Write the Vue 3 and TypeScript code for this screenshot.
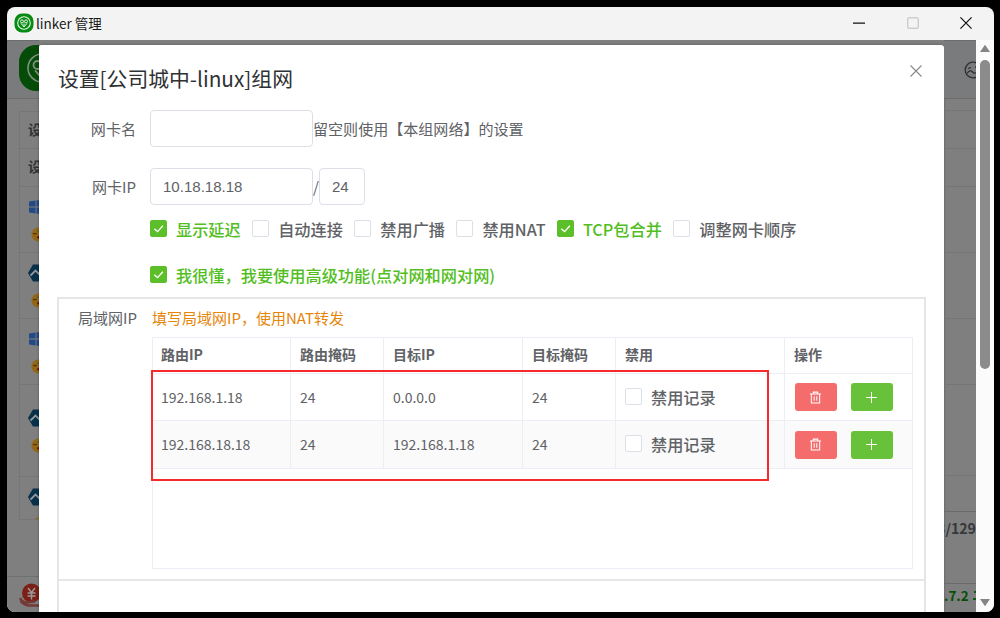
<script setup lang="ts">
interface Option {
  label: string
  checked: boolean
}
interface Route {
  ip: string
  mask: string
  target: string
  targetMask: string
}

const options: Option[] = [
  { label: '显示延迟', checked: true },
  { label: '自动连接', checked: false },
  { label: '禁用广播', checked: false },
  { label: '禁用NAT', checked: false },
  { label: 'TCP包合并', checked: true },
  { label: '调整网卡顺序', checked: false },
]

const columns: string[] = ['路由IP', '路由掩码', '目标IP', '目标掩码', '禁用', '操作']

const routes: Route[] = [
  { ip: '192.168.1.18', mask: '24', target: '0.0.0.0', targetMask: '24' },
  { ip: '192.168.18.18', mask: '24', target: '192.168.1.18', targetMask: '24' },
]

const devices: { os: 'windows' | 'alpine'; size: string }[] = [
  { os: 'windows', size: 'mid' },
  { os: 'alpine', size: 'mid' },
  { os: 'windows', size: 'mid' },
  { os: 'alpine', size: 'tall' },
  { os: 'alpine', size: 'cut' },
]
</script>

<template>
  <div class="desktop">
    <div class="window">
      <header class="titlebar">
        <svg class="app-icon" viewBox="0 0 20 20">
          <rect x="0.5" y="0.5" width="19" height="19" rx="7.5" fill="#078a12" />
          <circle cx="10" cy="10" r="6.3" fill="none" stroke="#e8f6e8" stroke-width="1.1" />
          <g fill="none" stroke="#e8f6e8" stroke-width="1">
            <circle cx="8" cy="8.4" r="1.5" />
            <circle cx="12" cy="8.4" r="1.5" />
            <path d="M7 10.400 10 14l3-3.600M10 10.500v3" />
          </g>
        </svg>
        <span class="app-title">linker 管理</span>
        <div class="controls">
          <svg viewBox="0 0 12 12"><path d="M0 6.200h12" stroke="#111" stroke-width="1.300" /></svg>
          <svg viewBox="0 0 12 12"><rect x="0.8" y="0.8" width="10.4" height="10.4" rx="0.4" fill="none" stroke="#bcbcbc" stroke-width="1" /></svg>
          <svg viewBox="0 0 12 12"><path d="M.4.4l11.200 11.200M11.600.4.4 11.600" stroke="#111" stroke-width="1.200" /></svg>
        </div>
      </header>

      <div class="content">
        <aside class="rail left">
          <div class="rail-head">
            <svg class="logo" viewBox="0 0 46 46">
              <rect width="46" height="46" rx="17" fill="#044c08" />
              <circle cx="23" cy="23" r="14" fill="none" stroke="#7f8f80" stroke-width="1.600" />
              <circle cx="18.500" cy="20" r="4" fill="none" stroke="#7f8f80" stroke-width="1.800" />
              <path d="M16 25.500 22 32M22 25v7" fill="none" stroke="#7f8f80" stroke-width="1.800" />
            </svg>
          </div>
          <div class="device-list">
            <div class="device-cell head">设备</div>
            <div class="device-cell head second">设备</div>
            <div v-for="(d, i) in devices" :key="i" class="device-cell" :class="d.size">
              <svg v-if="d.os === 'windows'" class="os" viewBox="0 0 16 16">
                <path d="M0 2.600 6.600 1.600v5.900H0zM7.500 1.500 16 .2v7.300H7.500zM0 8.500h6.600v5.900L0 13.400zM7.500 8.500H16v7.300l-8.500-1.300z" fill="#244a86" />
              </svg>
              <svg v-else class="os hex" viewBox="0 0 20 18">
                <path d="M5 .5h10L20 9l-5 8.500H5L0 9z" fill="#07304a" />
                <path d="M2.500 11.500 7.500 6.500 11 10l2-2 4 4" fill="none" stroke="#8f9699" stroke-width="1.800" />
              </svg>
              <svg class="face" viewBox="0 0 16 16">
                <circle cx="8" cy="8" r="7.500" fill="#946716" />
                <path d="M2.500 7h3.500" stroke="#4a2f10" stroke-width="1.400" />
                <path d="M6.500 4.500h2.500" stroke="#3f5f50" stroke-width="1.300" />
                <circle cx="8" cy="11" r="1.400" fill="#6c1414" />
              </svg>
            </div>
          </div>
          <div class="rail-foot">
            <svg viewBox="0 0 24 24">
              <circle cx="12.500" cy="10" r="9.500" fill="#7a2017" />
              <path d="M9 5l3.500 4.500L16 5M8.500 10h8M8.500 13h8M12.500 9.500V16.500" fill="none" stroke="#999" stroke-width="1.500" />
              <path d="M1 15q2 4.500 7 4.500l8-1M1.500 18q4 4.500 9 4.500h13" fill="none" stroke="#753a35" stroke-width="2.600" />
            </svg>
          </div>
        </aside>

        <main class="dialog">
          <div class="dialog-head">
            <h1>设置[公司城中-linux]组网</h1>
            <svg class="close" viewBox="0 0 12 12"><path d="M.5.5l11 11M11.500.5l-11 11" stroke="#85888d" stroke-width="1.100" /></svg>
          </div>

          <div class="field">
            <label>网卡名</label>
            <div class="input wide"></div>
            <span>留空则使用【本组网络】的设置</span>
          </div>
          <div class="field second">
            <label>网卡IP</label>
            <div class="input wide">10.18.18.18</div>
            <span class="slash">/</span>
            <div class="input narrow">24</div>
          </div>

          <div class="checks">
            <div v-for="o in options" :key="o.label" class="check" :class="{ on: o.checked }">
              <i class="box"><svg v-if="o.checked" viewBox="0 0 16 16"><path d="M3.500 8.200 7 11.300l5.700-6.200" /></svg></i>
              <span>{{ o.label }}</span>
            </div>
          </div>
          <div class="checks advanced">
            <div class="check on">
              <i class="box"><svg viewBox="0 0 16 16"><path d="M3.500 8.200 7 11.300l5.700-6.200" /></svg></i>
              <span>我很懂，我要使用高级功能(点对网和网对网)</span>
            </div>
          </div>

          <section class="panel">
            <div class="lan-row">
              <label>局域网IP</label>
              <span class="tip">填写局域网IP，使用NAT转发</span>
            </div>
            <div class="table">
              <div class="tr th">
                <div v-for="c in columns" :key="c" class="td">{{ c }}</div>
              </div>
              <div v-for="r in routes" :key="r.ip" class="tr">
                <div class="td">{{ r.ip }}</div>
                <div class="td">{{ r.mask }}</div>
                <div class="td">{{ r.target }}</div>
                <div class="td">{{ r.targetMask }}</div>
                <div class="td">
                  <div class="check"><i class="box"></i><span>禁用记录</span></div>
                </div>
                <div class="td actions">
                  <button class="btn danger">
                    <svg viewBox="0 0 14 14"><path d="M1 3.200h12M4.600 3V1.200h4.800V3M2.500 3.200v9.600h9V3.200M5.600 5.600v4.800M8.400 5.600v4.800" /></svg>
                  </button>
                  <button class="btn success">
                    <svg viewBox="0 0 14 14"><path d="M7 1.200v11.600M1.200 7h11.600" /></svg>
                  </button>
                </div>
              </div>
              <div class="highlight"></div>
            </div>
          </section>
          <section class="panel next"></section>
        </main>

        <aside class="rail right">
          <div class="rail-head">
            <svg class="mood" viewBox="0 0 18 18">
              <circle cx="9" cy="9" r="7.800" />
              <path d="M3 12.500q3-4.500 5.500-1.500t6-1.500M4 7.500 7 6.500M11 6l3 .6" />
            </svg>
          </div>
          <div class="line l1"></div>
          <div class="line l2"></div>
          <div class="line l2"></div>
          <div class="line l3"></div>
          <div class="line l3"></div>
          <div class="line l3"></div>
          <div class="line l4"></div>
          <div class="line l5"></div>
          <div class="total"><span>3/129</span></div>
          <div class="version">
            <span>.7.2</span>
            <svg viewBox="0 0 3 12"><path d="M1 2h2v2H1zM0 9h3v2H0z" /></svg>
          </div>
        </aside>

        <div class="scrollbar">
          <svg viewBox="0 0 12 9"><path d="M6 .8 11 8H1z" /></svg>
          <div class="thumb"></div>
          <svg viewBox="0 0 12 9"><path d="M1 1h10L6 8.200z" /></svg>
        </div>
      </div>
    </div>
  </div>
</template>

<style>
body {
  margin: 0;
  background: #000;
}
</style>

<style scoped>
* {
  box-sizing: border-box;
}
.desktop {
  width: 1000px;
  height: 618px;
  padding: 7px 6px 6px 7px;
  background: #000;
  overflow: hidden;
  font-family: 'Noto Sans CJK SC', 'Noto Sans', sans-serif;
  color: #606266;
}
svg {
  display: block;
  flex: none;
}
.window {
  height: 605px;
  display: flex;
  flex-direction: column;
  border-radius: 8px;
  overflow: hidden;
  background: #f3f3f3;
}
.titlebar {
  height: 33px;
  flex: none;
  display: flex;
  align-items: center;
  padding: 0 22px 1px 7px;
}
.app-icon {
  width: 20px;
  height: 20px;
}
.app-title {
  margin-left: 2px;
  font-size: 13.5px;
  line-height: 20px;
  color: #1a1a1a;
}
.controls {
  margin-left: auto;
  display: flex;
  gap: 41.5px;
}
.controls svg {
  width: 12px;
  height: 12px;
}
.content {
  height: 572px;
  display: grid;
  grid-template-columns: 32px 905px 32px 18px;
  background: #7f7f7f;
}
.rail {
  display: flex;
  flex-direction: column;
  overflow: hidden;
  border-top: 1px solid #6b6c6d;
}
.rail-head {
  height: 58px;
  flex: none;
  background: #7a7b7d;
  border-bottom: 1px solid #6b6c6e;
}
.left .rail-head {
  padding: 4px 0 0 12px;
}
.logo {
  width: 46px;
  height: 46px;
}
.device-list {
  margin: 12px 0 0 12px;
  height: 409px;
  flex: none;
  overflow: hidden;
  border: 1px solid #74767a;
  border-right: 0;
}
.device-cell {
  height: 66px;
  display: flex;
  flex-direction: column;
  justify-content: center;
  padding: 1px 0 0 9px;
  border-bottom: 1px solid #74767a;
}
.device-cell.head {
  height: 37px;
  padding: 0 0 3px 8px;
  font-size: 14px;
  font-weight: 700;
  line-height: 20px;
  white-space: nowrap;
  color: #303133;
}
.device-cell.second {
  height: 38px;
}
.device-cell.tall {
  height: 92px;
}
.os {
  width: 16px;
  height: 16px;
}
.os.hex {
  width: 20px;
  height: 18px;
  margin: -1px 0 -1px -1px;
}
.face {
  width: 15px;
  height: 15px;
  margin: 12px 0 0 2px;
}
.rail-foot {
  margin-top: auto;
  height: 36px;
  flex: none;
  padding: 6px 0 0 12px;
  border-top: 1px solid #6f7072;
}
.rail-foot svg {
  width: 24px;
  height: 24px;
}
.dialog {
  margin-top: 5px;
  height: 567px;
  overflow: hidden;
  background: #fff;
  border-radius: 2px 3px 0 0;
  box-shadow: 0 0 3px rgba(0, 0, 0, 0.3);
}
.dialog-head {
  height: 65px;
  display: flex;
  justify-content: space-between;
  padding: 20px 22px 0 19px;
}
h1 {
  margin: -1px 0 0;
  font-size: 20.8px;
  line-height: 28px;
  font-weight: 400;
  color: #303133;
}
.close {
  width: 12px;
  height: 12px;
}
.field {
  display: flex;
  align-items: center;
  height: 37px;
  font-size: 15.05px;
  line-height: 24px;
}
.field.second {
  margin-top: 21px;
}
.field label {
  width: 97px;
  margin-right: 14px;
  text-align: right;
}
.input {
  height: 37px;
  border: 1px solid #dcdfe6;
  border-radius: 4px;
  padding: 0 0 0 12px;
  line-height: 35px;
  font-family: 'Liberation Sans', sans-serif;
}
.input.wide {
  width: 163px;
}
.input.narrow {
  width: 46px;
}
.slash {
  width: 6px;
  text-align: center;
}
.checks {
  display: flex;
  gap: 11.4px;
  padding-left: 111px;
  margin-top: 12px;
}
.checks.advanced {
  margin-top: 22px;
}
.check {
  display: flex;
  align-items: center;
  height: 24px;
  font-size: 16.2px;
  line-height: 24px;
  font-weight: 500;
  white-space: nowrap;
}
.check span {
  margin-left: 9px;
}
.box {
  width: 17px;
  height: 17px;
  margin-top: -1px;
  border: 1px solid #dcdfe6;
  border-radius: 2px;
  background: #fff;
}
.check.on {
  color: #52be22;
}
.on .box {
  border-color: #5cbf2a;
  background: #5cbf2a;
}
.box svg {
  width: 15px;
  height: 15px;
}
.box path {
  fill: none;
  stroke: #fff;
  stroke-width: 1.4;
}
.panel {
  width: 869px;
  height: 284px;
  margin: 10px 0 0 18px;
  border: 2px solid #e6e6e8;
}
.panel.next {
  margin-top: -2px;
}
.lan-row {
  display: flex;
  height: 38px;
  align-items: center;
  font-size: 15px;
  line-height: 24px;
}
.lan-row label {
  width: 78px;
  text-align: right;
}
.tip {
  margin-left: 15px;
  color: #e6860a;
}
.table {
  position: relative;
  width: 761px;
  height: 232px;
  margin-left: 93px;
  border: 1px solid #ebeef5;
}
.tr {
  display: grid;
  grid-template-columns: 138px 93px 139px 93px 169px 1fr;
  height: 48px;
  font-size: 14px;
}
.tr.th {
  height: 36px;
  font-weight: 700;
}
.tr:nth-child(2) {
  height: 47px;
}
.tr:nth-child(3) {
  background: #fafafa;
}
.td {
  display: flex;
  align-items: center;
  padding: 0 0 1px 9px;
  border-right: 1px solid #ebeef5;
  border-bottom: 1px solid #ebeef5;
}
.td:first-child {
  padding-left: 8px;
}
.th .td {
  padding-bottom: 3px;
}
.td:last-child {
  border-right: 0;
}
.td.actions {
  gap: 14px;
  padding: 0 0 0 9.5px;
}
.btn {
  width: 42px;
  height: 28px;
  display: flex;
  align-items: center;
  justify-content: center;
  padding: 0;
  border: 0;
  border-radius: 3px;
}
.danger {
  background: #f56c6c;
}
.success {
  background: #67c23a;
}
.btn svg {
  width: 13px;
  height: 13px;
}
.btn path {
  fill: none;
  stroke: #fff;
  stroke-width: 1.1;
}
.highlight {
  position: absolute;
  left: -2px;
  top: 32px;
  width: 618px;
  height: 111px;
  border: 2px solid #f52a2a;
}
.mood {
  width: 18px;
  height: 18px;
  margin: 20px 0 0 20px;
  fill: none;
  stroke: #2e2f31;
  stroke-width: 1.3;
}
.line {
  flex: none;
  border-bottom: 1px solid #747577;
}
.l1 {
  height: 12px;
}
.l2 {
  height: 38px;
}
.l3 {
  height: 66px;
}
.l4 {
  height: 91px;
}
.l5 {
  height: 36px;
  border-color: #6a6b6d;
}
.total {
  height: 72px;
  flex: none;
  display: flex;
  justify-content: flex-end;
  border-bottom: 1px solid #6a6b6d;
  font-size: 14.2px;
  line-height: 32px;
  font-weight: 700;
  color: #36383b;
}
.version {
  display: flex;
  align-items: center;
  justify-content: space-between;
  font-size: 13.5px;
  line-height: 22px;
  font-weight: 700;
  color: #064f0b;
}
.version svg {
  width: 3px;
  height: 12px;
  fill: #0a5a10;
}
.scrollbar {
  display: flex;
  flex-direction: column;
  align-items: center;
  padding: 4px 0 5px;
  background: #fbfbfb;
}
.scrollbar svg {
  width: 12px;
  height: 9px;
}
.scrollbar path {
  fill: #858585;
}
.thumb {
  width: 10px;
  height: 309px;
  margin: 7px 0 auto;
  border-radius: 5px;
  background: #8b8b8b;
}
</style>
